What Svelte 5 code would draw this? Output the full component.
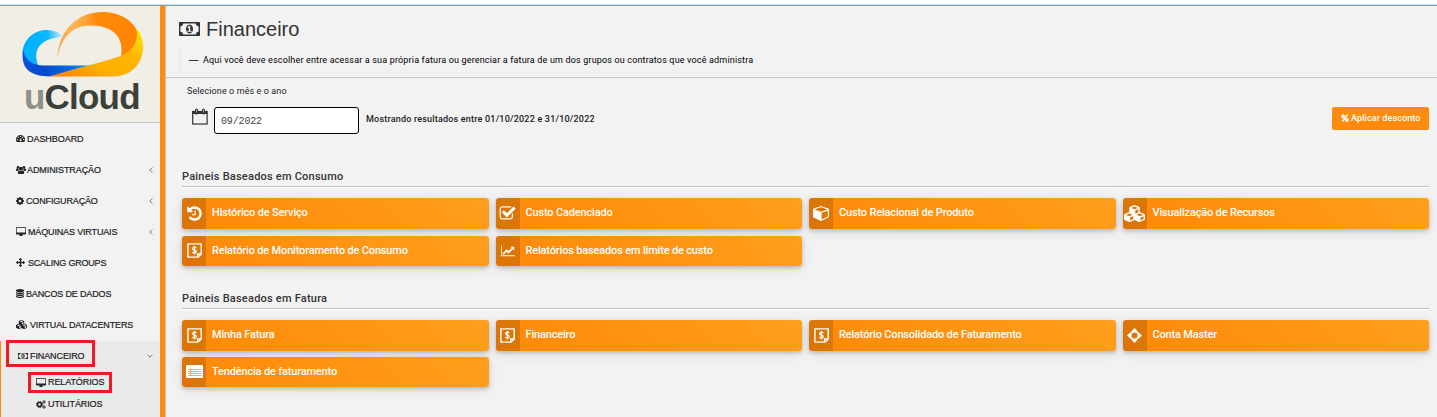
<script>
  const P = {
    history: ['0 0 1792 1792', 'M1664 896q0 156-61 298t-164 245-245 164-298 61q-172 0-327-72.5t-264-204.5q-7-10-6.5-22.5t8.5-20.5l137-138q10-9 25-9 16 2 23 12 73 95 179 147t225 52q104 0 198.5-40.5t163.5-109.5 109.5-163.5 40.5-198.5-40.5-198.5-109.5-163.5-163.5-109.5-198.5-40.5q-98 0-188 35.5t-160 101.5l137 138q31 30 14 69-17 40-59 40h-448q-26 0-45-19t-19-45v-448q0-42 40-59 39-17 69 14l130 129q107-101 244.5-156.5t284.5-55.5q156 0 298 61t245 164 164 245 61 298zm-640-288v448q0 14-9 23t-23 9h-320q-14 0-23-9t-9-23v-64q0-14 9-23t23-9h224v-352q0-14 9-23t23-9h64q14 0 23 9t9 23z'],
    check: ['0 0 1792 1792', 'M1472 930v318q0 119-84.5 203.5t-203.5 84.5h-832q-119 0-203.5-84.5t-84.5-203.5v-832q0-119 84.5-203.5t203.5-84.5h832q63 0 117 25 15 7 18 23 3 17-9 29l-49 49q-10 10-23 10-3 0-9-2-23-6-45-6h-832q-66 0-113 47t-47 113v832q0 66 47 113t113 47h832q66 0 113-47t47-113v-254q0-13 9-22l64-64q10-10 23-10 6 0 12 3 20 8 20 29zm231-489l-814 814q-24 24-57 24t-57-24l-430-430q-24-24-24-57t24-57l110-110q24-24 57-24t57 24l263 263 647-647q24-24 57-24t57 24l110 110q24 24 24 57t-24 57z'],
    cube: ['0 0 1664 1792', 'M896 1629l640-349v-636l-640 233v752zm-64-865l698-254-698-254-698 254zm832-252v768q0 35-18 65t-49 47l-704 384q-28 16-61 16t-61-16l-704-384q-31-17-49-47t-18-65v-768q0-40 23-73t61-47l704-256q22-8 44-8t44 8l704 256q38 14 61 47t23 73z'],
    cubes: ['0 0 24 20', 'M12 0l5.3 2.2.7 1v5l5.3 2.3.7 1v5l-.6 1L18 20h-1l-5-2.5L7 20H6L.6 17.5 0 16.500v-5l.7-1L6 8.200v-5l.7-1zM12 1.800L8.300 3.400 12 5l3.700-1.600zM12.900 6.500v3.700l3.400-1.500V5zM6 9.900l-3.700 1.600L6 13.100l3.700-1.600zM6.900 14.600v3.700l3.700-1.800v-3.400zM18 9.900l-3.700 1.600 3.700 1.600 3.700-1.600zM18.900 14.600v3.700l3.400-1.800v-3.400z'],
    chart: ['0 0 2048 1792', 'M2048 1536v128h-2048v-1536h128v1408h1920zm-128-1248v435q0 21-19.5 29.5t-35.5-7.5l-121-121-633 633q-10 10-23 10t-23-10l-233-233-416 416-192-192 585-585q10-10 23-10t23 10l233 233 464-464-121-121q-16-16-7.500-35.500t29.500-19.500h435q14 0 23 9t9 23z'],
    cog: ['128 128 1536 1536', 'M1152 896q0-106-75-181t-181-75-181 75-75 181 75 181 181 75 181-75 75-181zm512-109v222q0 12-8 23t-20 13l-185 28q-19 54-39 91 35 50 107 138 10 12 10 25t-9 23q-27 37-99 108t-94 71q-12 0-26-9l-138-108q-44 23-91 38-16 136-29 186-7 28-36 28h-222q-14 0-24.500-8.500t-11.500-21.500l-28-184q-49-16-90-37l-141 107q-10 9-25 9-14 0-25-11-126-114-165-168-7-10-7-23 0-12 8-23 15-21 51-66.500t54-70.500q-27-50-41-99l-183-27q-13-2-21-12.500t-8-23.500v-222q0-12 8-23t19-13l186-28q14-46 39-92-40-57-107-138-10-12-10-24 0-10 9-23 26-36 98.500-107.500t94.500-71.500q13 0 26 10l138 107q44-23 91-38 16-136 29-186 7-28 36-28h222q14 0 24.500 8.500t11.500 21.500l28 184q49 16 90 37l142-107q9-9 24-9 13 0 25 10 129 119 165 170 7 8 7 22 0 12-8 23-15 21-51 66.500t-54 70.500q26 50 41 98l183 28q13 2 21 12.500t8 23.500z'],
    arrows: ['0 0 1792 1792', 'M1792 896q0 26-19 45l-256 256q-19 19-45 19t-45-19-19-45v-128h-384v384h128q26 0 45 19t19 45-19 45l-256 256q-19 19-45 19t-45-19l-256-256q-19-19-19-45t19-45 45-19h128v-384h-384v128q0 26-19 45t-45 19-45-19l-256-256q-19-19-19-45t19-45l256-256q19-19 45-19t45 19 19 45v128h384v-384h-128q-26 0-45-19t-19-45 19-45l256-256q19-19 45-19t45 19l256 256q19 19 19 45t-19 45-45 19h-128v384h384v-128q0-26 19-45t45-19 45 19l256 256q19 19 19 45z'],
    database: ['128 0 1536 1792', 'M896 768q237 0 443-43t325-127v170q0 69-103 128t-280 93.500-385 34.500-385-34.500-280-93.500-103-128v-170q119 84 325 127t443 43zm0 768q237 0 443-43t325-127v170q0 69-103 128t-280 93.500-385 34.500-385-34.500-280-93.500-103-128v-170q119 84 325 127t443 43zm0-384q237 0 443-43t325-127v170q0 69-103 128t-280 93.500-385 34.500-385-34.500-280-93.500-103-128v-170q119 84 325 127t443 43zm0-1152q208 0 385 34.500t280 93.500 103 128v128q0 69-103 128t-280 93.500-385 34.500-385-34.500-280-93.500-103-128v-128q0-69 103-128t280-93.500 385-34.500z'],
    desktop: ['-64 0 1920 1664', 'M1728 992v-832q0-13-9.500-22.500t-22.500-9.500h-1600q-13 0-22.500 9.500t-9.500 22.500v832q0 13 9.500 22.500t22.500 9.500h1600q13 0 22.500-9.500t9.500-22.500zm128-832v1088q0 66-47 113t-113 47h-544q0 37 16 77.500t32 71 16 43.500q0 26-19 45t-45 19h-512q-26 0-45-19t-19-45q0-14 16-44t32-70 16-78h-544q-66 0-113-47t-47-113v-1088q0-66 47-113t113-47h1600q66 0 113 47t47 113z'],
    money: ['0 256 1920 1280', 'M768 1152h384v-96h-128v-448h-114l-148 137 77 80q42-37 55-57h2v288h-128v96zm512-256q0 70-21 142t-59.500 134-101.500 101-138 39-138-39-101.500-101-59.500-134-21-142 21-142 59.500-134 101.500-101 138-39 138 39 101.500 101 59.500 134 21 142zm512 256v-512q-106 0-181-75t-75-181h-1152q0 106-75 181t-181 75v512q106 0 181 75t75 181h1152q0-106 75-181t181-75zm128-832v1152q0 26-19 45t-45 19h-1792q-26 0-45-19t-19-45v-1152q0-26 19-45t45-19h1792q26 0 45 19t19 45z'],
    dash: ['0 0 18 14', 'M9 0a9 9 0 0 1 7.700 13.600l-.8.400H2.100l-.8-.4A9 9 0 0 1 9 0zM9 1.300a1.300 1.300 0 1 0 0 2.600 1.300 1.300 0 0 0 0-2.600zM4.500 3.200a1.300 1.300 0 1 0 0 2.600 1.300 1.300 0 0 0 0-2.600zM13.500 3.200a1.300 1.300 0 1 0 0 2.600 1.300 1.300 0 0 0 0-2.600zM2.600 7.700a1.300 1.300 0 1 0 0 2.600 1.300 1.300 0 0 0 0-2.600zM15.400 7.700a1.300 1.300 0 1 0 0 2.600 1.300 1.300 0 0 0 0-2.600zM10 5l-1 3.700a2 2 0 1 0 1.300.3l1-3.700z'],
    users: ['0 0 20 16', 'M4 0a2.600 2.600 0 1 1 0 5.300A2.600 2.600 0 0 1 4 0zM16 0a2.600 2.600 0 1 1 0 5.300A2.600 2.600 0 0 1 16 0zM10 1.500a4 4 0 1 1 0 8 4 4 0 0 1 0-8zM0 5q2 1 5 .5a5 5 0 0 0 .8 3Q4 9 3.500 10H1.500Q0 10 0 8.500zM20 5q-2 1-5 .5a5 5 0 0 1-.8 3q1.800.5 2.300 1.500h2Q20 10 20 8.500zM6.500 9q3.500 2.500 7 0 3 0 3 5 0 2-2 2h-9q-2 0-2-2 0-5 3-5z']
  };

  const nav = [
    { i: 'dash', t: 'DASHBOARD', s: -0.05, w: 9, h: 7, g: 2 },
    { i: 'users', t: 'ADMINISTRAÇÃO', s: -0.08, w: 10, h: 8, g: 1, c: true },
    { i: 'cog', t: 'CONFIGURAÇÃO', s: -0.15, w: 8, h: 8, g: 2, c: true },
    { i: 'desktop', t: 'MÁQUINAS VIRTUAIS', s: -0.15, w: 10, h: 9, g: 2, c: true },
    { i: 'arrows', t: 'SCALING GROUPS', s: -0.2, w: 9, h: 9, g: 3 },
    { i: 'database', t: 'BANCOS DE DADOS', s: -0.15, w: 8, h: 9, g: 2 },
    { i: 'cubes', t: 'VIRTUAL DATACENTERS', s: -0.13, w: 11, h: 9, g: 3 }
  ];
  const groups = [
    { title: 'Paineis Baseados em Consumo', cards: [
      ['history', 'Histórico de Serviço'], ['check', 'Custo Cadenciado'],
      ['cube', 'Custo Relacional de Produto'], ['cubes', 'Visualização de Recursos'],
      ['bill', 'Relatório de Monitoramento de Consumo'], ['chart', 'Relatórios baseados em limite de custo']
    ] },
    { title: 'Paineis Baseados em Fatura', cards: [
      ['bill', 'Minha Fatura'], ['bill', 'Financeiro'],
      ['bill', 'Relatório Consolidado de Faturamento'], ['target', 'Conta Master'],
      ['table', 'Tendência de faturamento']
    ] }
  ];
  const size = { history: [17, 17], check: [17, 17], cube: [16, 16], cubes: [21, 17], chart: [14, 12] };
</script>

{#snippet icon(name, w, h)}
  <svg class="ic" width={w} height={h} viewBox={P[name][0]} preserveAspectRatio="none" fill="currentColor" fill-rule="evenodd"><path d={P[name][1]} /></svg>
{/snippet}

<div class="page">
  <div class="topbar"></div>
  <div class="shell">
    <aside>
      <div class="logo">
        <svg width="122" height="67" viewBox="0 0 122 67">
          <defs>
            <linearGradient id="o1" x1="0" x2="1"><stop offset="0" stop-color="#f9a13a" /><stop offset=".2" stop-color="#ffb75c" /><stop offset=".5" stop-color="#ff8a0a" /><stop offset="1" stop-color="#ff8400" /></linearGradient>
            <linearGradient id="y1" x1="0" x2="1" y1="1" y2="0"><stop offset="0" stop-color="#ff7a00" /><stop offset=".35" stop-color="#ffb000" /><stop offset=".65" stop-color="#ffb400" /><stop offset="1" stop-color="#ffee00" /></linearGradient>
            <linearGradient id="b1" x1="0" x2="1"><stop offset="0" stop-color="#00aeff" /><stop offset=".6" stop-color="#08b8ff" /><stop offset="1" stop-color="#d8eef5" /></linearGradient>
            <linearGradient id="b2" x1="0" x2="1"><stop offset="0" stop-color="#0a50dc" /><stop offset=".3" stop-color="#0648cc" /><stop offset=".7" stop-color="#0474e8" /><stop offset="1" stop-color="#08b4ff" /></linearGradient>
          </defs>
          <path d="M.5 41C2 27 13 19 25 19c7 0 13 3 16.500 7C28 26 12 32 14.500 48 15 52 16 54 17 55 7 53 1 48 .5 41z" fill="url(#b1)" />
          <path d="M1 39C3 49 10 54.500 22 54.500H75L27 65.500C10 65 -2 59 1 39z" fill="url(#b2)" />
          <path d="M35.500 47C37 18 56 1 81 1c17 0 30 9 34 19C118 33 111 43 99 45 102 29 94 15 70 14.500 50 14 39 27 35.500 47z" fill="url(#o1)" />
          <path d="M27 65.500C52 58 80 51 99 45c11-5 18-14 15.500-28 7 8 7.500 20 5.500 27-4 14-15 21.500-29 21.500z" fill="url(#y1)" />
        </svg>
        <div class="word"><span>u</span>Cloud</div>
      </div>
      <nav>
        {#each nav as n}
          <div class="item">
            {@render icon(n.i, n.w, n.h)}<span style="letter-spacing:{n.s}px;margin-left:{n.g}px">{n.t}</span>
            {#if n.c}<svg class="chev" width="4" height="6" viewBox="0 0 4 6"><path d="M3.300.5L.8 3l2.500 2.500" /></svg>{/if}
          </div>
        {/each}
      </nav>
      <div class="open">
        <div class="parent">
          <div class="redbox fin">{@render icon('money', 10, 6)}<span>FINANCEIRO</span></div>
          <svg class="chev" width="6" height="4" viewBox="0 0 6 4"><path d="M.5.700L3 3.200 5.500.7" /></svg>
        </div>
        <div class="redbox rel">{@render icon('desktop', 10, 9)}<span>RELATÓRIOS</span></div>
        <div class="util">
          <svg class="ic" width="10" height="9" viewBox="0 0 20 18" fill="none" stroke="currentColor"><circle cx="7" cy="9" r="4" stroke-width="3" /><circle cx="7" cy="9" r="6" stroke-width="2" stroke-dasharray="2.700 2" /><circle cx="16" cy="4" r="2.300" stroke-width="2" /><circle cx="16" cy="14" r="2.300" stroke-width="2" /></svg><span>UTILITÁRIOS</span>
        </div>
      </div>
    </aside>
    <main>
      <header>
        <h1>{@render icon('money', 21, 14)}<span>Financeiro</span></h1>
        <div class="quote"><span class="dash">—</span><span class="qt">Aqui você deve escolher entre acessar a sua própria fatura ou gerenciar a fatura de um dos grupos ou contratos que você administra</span></div>
      </header>
      <section class="filter">
        <div class="lab">Selecione o mês e o ano</div>
        <div class="frow">
          <svg class="cal" width="16" height="17" viewBox="0 0 16 17"><rect x=".7" y="3.500" width="14.400" height="12.500" fill="none" stroke="#333" stroke-width="1.200" /><path d="M.5 3h14.800v3H.5z" fill="#333" /><path d="M4.500 2v3M11.500 2v3" stroke="#333" stroke-width="3" stroke-linecap="round" /><path d="M4.500 1.500v3M11.500 1.500v3" stroke="#ccc" stroke-width=".8" /></svg>
          <div class="input">09/2022</div>
          <div class="range">Mostrando resultados entre 01/10/2022 e 31/10/2022</div>
          <button><svg width="8" height="8" viewBox="0 0 8 8" fill="none" stroke="#fff"><circle cx="2" cy="2.200" r="1.200" stroke-width="1.500" /><circle cx="6" cy="5.900" r="1.200" stroke-width="1.500" /><path d="M6.700.5L1.300 7.500" stroke-width="1.400" /></svg><span>Aplicar desconto</span></button>
        </div>
      </section>
      {#each groups as g}
        <section class="group">
          <h2>{g.title}</h2>
          <div class="grid">
            {#each g.cards as [ic, t]}
              <div class="card">
                <div class="box">
                  {#if ic === 'bill'}
                    <svg width="15" height="15" viewBox="0 0 15 15" fill="none" stroke="#fff"><path d="M14.200 11V.9H.9v13.200h10.100z" stroke-width="1.400" stroke-linejoin="round" /><path d="M10.600 14V11h3.600" stroke-width="1.300" /><path d="M9.300 5.300C8.900 4.500 8.300 4.200 7.400 4.200c-2.300 0-2.500 2.500 0 2.900 2.700.5 2.400 3 0 3-1 0-1.700-.4-2-1.200M7.400 3v8.400" stroke-width="1.200" /></svg>
                  {:else if ic === 'target'}
                    <svg width="15" height="15" viewBox="0 0 15 15"><circle cx="7.500" cy="7.500" r="4.100" fill="none" stroke="#fff" stroke-width="2" /><path d="M7.500 0l2.800 3H4.700zM7.500 15l2.800-3H4.700zM0 7.500l3-2.800v5.600zM15 7.500l-3-2.800v5.600z" fill="#fff" /></svg>
                  {:else if ic === 'table'}
                    <svg width="17" height="13" viewBox="0 0 17 13"><rect width="17" height="13" rx="1" fill="#fff" /><path d="M2 4.500h13.500M2 6.500h13.500M2 8.500h13.500M2 10.500h13.500M4.500 4v7" stroke="#e8955c" stroke-width=".8" /></svg>
                  {:else}
                    {@render icon(ic, size[ic][0], size[ic][1])}
                  {/if}
                </div>
                <span>{t}</span>
              </div>
            {/each}
          </div>
        </section>
      {/each}
    </main>
  </div>
</div>

<style>
  :global(body) { background: #f2f2f2; }
  .page { height: 417px; overflow: hidden; font-family: "Liberation Sans", Arial, sans-serif; color: #222; display: flex; flex-direction: column; white-space: nowrap; }
  .page :global(*), .page { box-sizing: border-box; }
  svg { display: block; flex: none; }
  .topbar { height: 6px; flex: none; background: linear-gradient(#fff 4px, #d9d9dc 4px 5px, #f98a16 5px); }
  .shell { flex: 1; display: flex; min-height: 0; }
  aside { width: 166px; flex: none; border-right: 1px solid #c6c6c6; box-shadow: inset -5px 0 #ff8c0a; padding-right: 5px; }
  .logo { height: 117px; background: #f1eee6; border-bottom: 1px solid #c2c2c4; padding: 5px 0 0 22px; }
  .word { font-weight: 700; font-size: 35px; line-height: 36px; margin-top: 1px; padding-left: 2px; color: #3b4038; letter-spacing: -.8px; }
  .word span { color: #8d8f88; }
  nav { height: 218px; }
  .item { height: 31px; display: flex; align-items: center; padding: 0 7px 0 16px; font-size: 9px; }
  .item span, .open span { -webkit-text-stroke: .2px; }
  .chev { margin-left: auto; fill: none; stroke: #666; stroke-width: .9; }
  .open { background: #eaeaea; border-left: 1px solid #ff8c0a; height: 76px; font-size: 9px; }
  .parent { display: flex; align-items: center; padding-right: 7px; height: 24px; }
  .parent .chev { margin-top: 6px; }
  .redbox { border: 3px solid #ed1c24; display: flex; align-items: center; gap: 2px; }
  .fin { width: 89px; height: 27px; margin: 1px 0 0 5px; padding: 4px 0 0 9px; letter-spacing: -.1px; }
  .rel { width: 84px; height: 21px; margin: 7px 0 0 27px; padding: 0 0 1px 5px; letter-spacing: -.1px; }
  .util { display: flex; align-items: center; gap: 2px; height: 20px; padding-left: 35px; margin-top: 1px; letter-spacing: -.1px; }
  main { flex: 1; min-width: 0; }
  header { height: 72px; border-bottom: 1px solid #c6c6c6; padding: 11px 0 0 13px; }
  h1 { margin: 0; font-size: 20px; font-weight: 400; line-height: 24px; display: flex; align-items: center; gap: 6px; color: #333; }
  .quote { margin-top: 6px; height: 26px; border-left: 3px solid #ececec; padding-left: 7px; display: flex; align-items: center; font: 9px Roboto, sans-serif; color: #000; }
  .dash { width: 14px; font-family: "Liberation Sans", sans-serif; -webkit-text-stroke: .3px; }
  .qt { letter-spacing: .165px; }
  .filter { padding: 6px 8px 0 21px; height: 90px; }
  .lab { font: 9px/15px Roboto, sans-serif; letter-spacing: .1px; }
  .frow { display: flex; align-items: flex-start; padding: 8px 0 0 5px; }
  .cal { margin-top: 1px; }
  .input { width: 145px; height: 27px; margin-left: 6px; background: #fff; border: 1px solid #000; border-radius: 3px; font: 10px/27px "Liberation Mono", monospace; padding-left: 6px; color: #444; letter-spacing: -.15px; }
  .range { margin: 4px 0 0 7px; font: 500 9px/17px Roboto, sans-serif; letter-spacing: .2px; color: #222; }
  button { margin-left: auto; width: 97px; height: 23px; background: #ff8b0c; border: 0; border-radius: 2px; color: #fff; display: flex; align-items: center; padding: 0 0 1px 9px; gap: 2px; font: 500 9px Roboto, sans-serif; letter-spacing: .1px; }
  .group { padding: 0 8px 0 16px; height: 122px; }
  h2 { margin: 0; height: 19px; font: 500 11px/17px Roboto, sans-serif; border-bottom: 1px solid #bfbfbf; box-shadow: 0 1px #fff; color: #333; letter-spacing: .22px; }
  .grid { display: grid; grid-template-columns: repeat(4, 1fr); gap: 7px; padding-top: 11px; }
  .group:last-child .grid { row-gap: 6px; }
  .card { height: 30.500px; border-radius: 3px; background: linear-gradient(45deg, #ff8808, #ff9f1d); box-shadow: 0 2px 4px rgba(0,0,0,.2), 0 3px 14px rgba(0,0,0,.08); display: flex; overflow: hidden; color: #fff; font: 500 11px Roboto, sans-serif; letter-spacing: -.17px; }
  .box { width: 24px; background: rgba(0,0,0,.14); display: flex; align-items: center; justify-content: center; margin-right: 6px; }
  .card > span { line-height: 30px; }
</style>
